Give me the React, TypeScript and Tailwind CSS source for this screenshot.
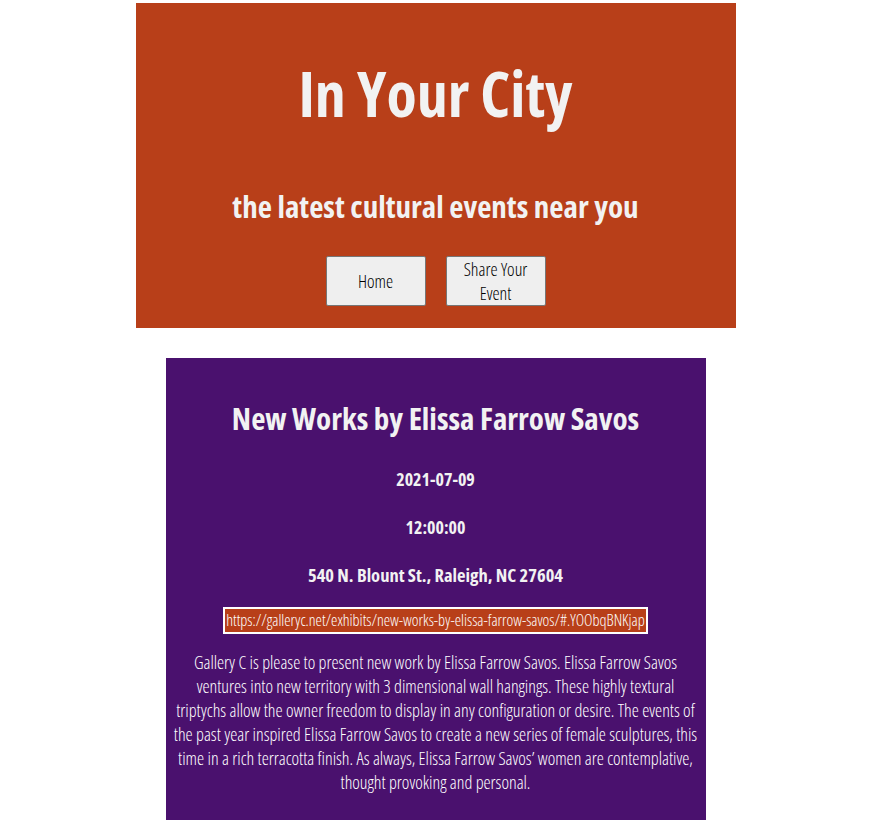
import React from 'react';

const cond = "font-['Open_Sans',sans-serif] font-stretch-condensed";

const navButton = `${cond} font-light w-[100px] h-[50px] px-[6px] bg-[#efefef] text-black border border-[#767676] rounded-[2px] text-[18px] leading-[24px]`;

const Header: React.FC = () => (
    <header className="w-[600px] mx-auto mt-[3px] bg-[#b83f19] text-[#f2f2f2] text-center pt-[52px] pb-[22px]">
        <h1 className={`${cond} font-bold text-[62px] leading-[76px]`}>In Your City</h1>
        <h2 className={`${cond} font-bold text-[31px] leading-[40px] mt-[55px]`}>the latest cultural events near you</h2>
        <nav className="flex justify-center gap-5 mt-[30px]">
            <button className={navButton}>Home</button>
            <button className={navButton}>Share Your Event</button>
        </nav>
    </header>
);

const EventCard: React.FC = () => (
    <article className={`${cond} w-[540px] mx-auto mt-[30px] bg-[#4a116e] text-[#f2f2f2] text-center px-[8px] pt-[40px] pb-[26px]`}>
        <h3 className="font-bold text-[31px] leading-[40px]">New Works by Elissa Farrow Savos</h3>
        <p className="font-bold text-[18px] leading-[24px] mt-[29px]">2021-07-09</p>
        <p className="font-bold text-[18px] leading-[24px] mt-[24px]">12:00:00</p>
        <p className="font-bold text-[18.5px] leading-[24px] mt-[24px]">540 N. Blount St., Raleigh, NC 27604</p>
        <div className="mt-[20px]">
            <a className="inline-block bg-[#b83f19] border-2 border-white px-[1px] text-[16px] leading-[23px] font-light text-white">
                https://galleryc.net/exhibits/new-works-by-elissa-farrow-savos/#.YOObqBNKjap
            </a>
        </div>
        <p className="font-light text-[18px] leading-[24px] mt-[16px] text-white">
            Gallery C is please to present new work by Elissa Farrow Savos. Elissa Farrow Savos ventures into new territory with 3 dimensional wall hangings. These highly textural triptychs allow the owner freedom to display in any configuration or desire. The events of the past year inspired Elissa Farrow Savos to create a new series of female sculptures, this time in a rich terracotta finish. As always, Elissa Farrow Savos’ women are contemplative, thought provoking and personal.
        </p>
    </article>
);

export default function App() {
    return (
        <div className="bg-white min-h-[826px] w-[869px] pl-[2px]">
            <Header />
            <EventCard />
        </div>
    );
}
